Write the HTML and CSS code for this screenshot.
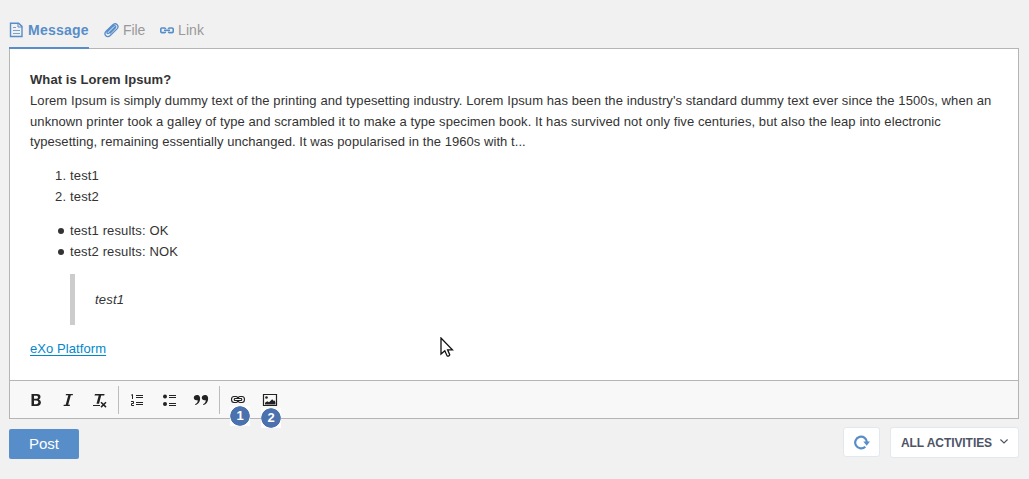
FILE: index.html
```html
<!DOCTYPE html>
<html lang="en">
<head>
<meta charset="utf-8">
<title>Activity composer</title>
<link rel="stylesheet" href="styles.css">
</head>
<body>
<main class="composer">
  <nav class="tabs">
    <a class="tab active"><svg class="i-doc" width="14" height="16" viewBox="0 0 14 16" fill="none" stroke="currentColor"><path stroke-width="1.4" d="M1.5 1.2H9.6L13 4.4V14.5H1.5Z"/><path d="M9 1V5H13" /><path stroke-width=".8" d="M4 5.5H7M4 8.5H11M4 11.5H11"/></svg><span class="t-message">Message</span></a>
    <a class="tab"><svg class="i-clip" width="15" height="15" viewBox="0 0 15 15" fill="none" stroke="currentColor" stroke-width="1.3" stroke-linecap="round"><path d="M8.6 2 2.1 8.3C-.9 11.3 3 15.6 6 12.7L12.8 6.1C16 2.8 11.8-.8 9.1 1.7M10.5 4.4 5 10C3.4 11.4 2.3 9.9 3.6 8.6L8.9 3.4C11 1.5 12.8 3.5 11 5.3L6.3 10"/></svg><span class="t-file">File</span></a>
    <a class="tab"><svg class="i-chain" width="14" height="7" viewBox="0 0 14 7" fill="none" stroke="currentColor" stroke-width="1.6"><path d="M5.5 2V1.8Q5.5 1 4.5 1H2Q.8 1 .8 2.1V4.5Q.8 5.6 2 5.6H4.5Q5.5 5.6 5.5 4.7V4.5M8.5 2V1.8Q8.5 1 9.5 1H12Q13.2 1 13.2 2.1V4.5Q13.2 5.6 12 5.6H9.5Q8.5 5.6 8.5 4.7V4.5M4 3.3H10"/></svg><span class="t-link">Link</span></a>
  </nav>
  <section class="editor">
    <div class="content">
      <p><strong>What is Lorem Ipsum?</strong><br><span class="l1">Lorem Ipsum is simply dummy text of the printing and typesetting industry. Lorem Ipsum has been the industry's standard dummy text ever since the 1500s, when an</span><br><span class="l2">unknown printer took a galley of type and scrambled it to make a type specimen book. It has survived not only five centuries, but also the leap into electronic</span><br><span class="l3">typesetting, remaining essentially unchanged. It was popularised in the 1960s with t...</span></p>
      <ol><li>test1</li><li>test2</li></ol>
      <ul><li>test1 results: OK</li><li>test2 results: NOK</li></ul>
      <blockquote>test1</blockquote>
      <p><a class="link">eXo Platform</a></p>
    </div>
    <div class="toolbar">
      <div class="group">
        <button class="tool" aria-label="Bold"><svg width="16" height="16" viewBox="0 0 16 16"><path fill="currentColor" fill-rule="evenodd" d="M3.5 2H9Q12.6 2.2 12.5 5.1 12.4 6.9 10.9 7.5 13 8.3 12.9 10.5 12.7 13.8 8.9 14H3.5ZM6 3.8V6.8H8.2Q10 6.7 10 5.2 10 3.8 8.2 3.8ZM6 8.6V12.2H8.4Q10.4 12 10.4 10.3 10.4 8.7 8.4 8.6Z"/></svg></button>
        <button class="tool" aria-label="Italic"><svg width="16" height="16" viewBox="0 0 16 16"><path fill="currentColor" d="M6 2H13L12.7 3.2H10.8L8.2 12.8H10L9.7 14H3.5L3.8 12.8H5.7L8.3 3.2H5.7Z"/></svg></button>
        <button class="tool" aria-label="Remove format"><svg width="16" height="16" viewBox="0 0 16 16"><path fill="currentColor" d="M3 2H12.6L12.2 3.6H9.2L7 11.8H4.5L6.7 3.6H2.5ZM1 13H8V14H1Z"/><path fill="none" stroke="currentColor" stroke-width="1.5" d="m9 10.3 5 4.8m0-4.8-5 4.8"/></svg></button>
      </div>
      <div class="group">
        <button class="tool" aria-label="Numbered list"><svg width="16" height="16" viewBox="0 0 16 16" fill="none" stroke="currentColor"><path stroke-width="1.1" d="M7 3.5H14M7 5.5H14M7 10.5H14M7 12.5H14"/><path d="M2.2 3.2 3.5 2.5V7M2 9.5H4.5V11.5H2.5V13.5H5"/></svg></button>
        <button class="tool" aria-label="Bulleted list"><svg width="16" height="16" viewBox="0 0 16 16"><circle cx="4" cy="4.6" r="2" fill="currentColor"/><circle cx="4" cy="12" r="2" fill="currentColor"/><path fill="none" stroke="currentColor" stroke-width="1.1" d="M8 3.5H15M8 5.5H15M8 11.5H15M8 13.5H15"/></svg></button>
        <button class="tool" aria-label="Quote"><svg width="16" height="16" viewBox="0 0 16 16" fill="currentColor"><path id="q" d="M4 3C8.4 2.6 8.4 11.2 2.7 13 2 13.1 2 12.4 2.5 12 4.2 11 4.8 9.9 4.7 8.2 2 8.7.7 7.4.8 5.6.9 4 2.2 3 4 3Z"/><use href="#q" x="8"/></svg></button>
      </div>
      <div class="group">
        <button class="tool" aria-label="Link"><svg width="16" height="16" viewBox="0 0 16 16" fill="none" stroke="currentColor" stroke-width="1.1"><path d="M7.5 6V5.5Q7.2 4.5 6 4.5H4Q1.5 4.5 1.5 7.5T4 10.5H6Q7.2 10.5 7.5 9.5V9M8.5 6V5.5Q8.8 4.5 10 4.5H12Q14.5 4.5 14.5 7.5T12 10.5H10Q8.8 10.5 8.5 9.5V9M4.7 6.5H11.3Q12.3 7.5 11.3 8.5H4.7Q3.7 7.5 4.7 6.5Z"/></svg><span class="badge one">1</span></button>
        <button class="tool" aria-label="Image"><svg width="16" height="16" viewBox="0 0 16 16"><path fill="none" stroke="currentColor" stroke-width="1.2" d="M1.5 2.5H14.5V13.5H1.5Z"/><circle cx="4.5" cy="5.5" r="1.3" fill="currentColor"/><path fill="currentColor" d="M3 12.5V10.8L5.3 9.3 7 10.3 10.2 7.3 11.5 8.8 12.5 8.5 13.4 10V12.5Z"/></svg><span class="badge two">2</span></button>
      </div>
    </div>
  </section>
  <footer class="actions">
    <button class="post">Post</button>
    <div class="filters">
      <button class="refresh" aria-label="Refresh"><svg width="16" height="15" viewBox="0 0 16 15"><path fill="none" stroke="currentColor" stroke-width="2.2" d="M11.3 11.7A5.9 5.9 0 1 1 13 7.5"/><path fill="currentColor" d="M9.3 6.5H16L12.7 10.7Z"/></svg></button>
      <button class="select"><span class="t-all">ALL ACTIVITIES</span><svg width="8" height="5" viewBox="0 0 8 5" fill="none" stroke="currentColor" stroke-width="1.2"><path d="m.4.5 3.6 3.4L7.6.5"/></svg></button>
    </div>
  </footer>
</main>
<svg class="pointer" width="14" height="21" viewBox="0 0 14 21"><path fill="#fff" stroke="#111" stroke-width="1.3" d="M1 1V17L4.8 13.7 7 18.7Q8.5 19.8 9.7 17.8L7.6 12.8H12.4Z"/></svg>
</body>
</html>
```
FILE: styles.css
```css
* { box-sizing: border-box; }
body { margin: 0; background: #f1f1f1; color: #333; font: 13px/20.8px "Liberation Sans", Arial, sans-serif; }
.composer { padding: 12px 10px 0 9px; }
button { border: 0; margin: 0; padding: 0; background: none; font-family: inherit; color: inherit; }
svg { display: block; flex: none; }

.tabs { display: flex; height: 36px; gap: 15px; }
.tab { display: flex; align-items: center; gap: 4px; height: 37px; color: #999; font-size: 14px; }
.tab svg { color: #578dc9; }
.active { width: 80px; gap: 5px; padding-top: 1px; color: #578dc9; font-weight: bold; border-bottom: 2px solid #578dc9; z-index: 1; }
.t-message { letter-spacing: .24px; }
.t-file { width: 22px; letter-spacing: -.1px; }
.t-link { letter-spacing: .1px; }

.editor { border: 1px solid #b5b5b5; background: #fff; height: 371px; display: flex; flex-direction: column; }
.content { flex: 1; padding: 21px 20px 0; white-space: nowrap; }
.content p { margin: 0; }
.content ol, .content ul { margin: 13px 0; padding-left: 40px; }
.content ol { letter-spacing: .15px; }
.content ul { margin-bottom: 12px; padding-left: 0; list-style: none; letter-spacing: .14px; }
.content ul li { display: flex; align-items: center; padding-left: 28px; gap: 6px; }
.content ul li::before { content: ""; width: 6px; height: 6px; border-radius: 50%; background: #333; }
.content blockquote { margin: 12px 40px 14px; padding: 16px 20px 14px; border-left: 5px solid #ccc; font-style: italic; letter-spacing: .2px; }
.content strong { letter-spacing: .09px; }
.l1 { letter-spacing: .0875px; }
.l2 { letter-spacing: .084px; }
.l3 { letter-spacing: .058px; }
.link { color: #0088cc; text-decoration: underline; text-underline-offset: 2px; letter-spacing: .08px; }

.toolbar { display: flex; align-items: center; height: 39px; flex: none; margin-top: -1px; padding-left: 10px; background: #f8f8f8; border-top: 1px solid #b5b5b5; }
.content + .toolbar { height: 38px; margin-top: 0; padding-top: 1px; }
.group { display: flex; height: 28px; align-items: center; }
.group + .group { border-left: 1px solid #bcbcbc; margin-left: 2px; padding-left: 2px; }
.tool { position: relative; width: 32px; height: 28px; display: flex; align-items: center; justify-content: center; color: #222; }
.group:first-child { width: 96px; }
.badge { position: absolute; width: 20px; height: 20px; background: radial-gradient(circle, #4c72ae 0 9.4px, #fff 10px); color: #fff; font: bold 13px/20px "Liberation Sans", sans-serif; text-align: center; z-index: 1; }
.one { left: 8px; top: 20px; }
.two { left: 7px; top: 22px; }

.actions { display: flex; justify-content: space-between; padding-top: 8px; }
.post { width: 70px; height: 30px; margin-top: 2px; padding-bottom: 2px; border-radius: 2px; background: #578dc9; color: #fff; font-size: 15px; }
.filters { display: flex; gap: 10px; }
.refresh, .select { display: flex; align-items: center; justify-content: center; background: #fff; border: 1px solid #e1e8ee; border-radius: 3px; }
.refresh { width: 37px; height: 30px; padding-left: 1px; color: #578dc9; }
.select { width: 129px; height: 31px; gap: 8px; color: #4d5466; font-size: 12px; font-weight: bold; }
.t-all { letter-spacing: -.07px; }
.select svg { margin-bottom: 2px; }
.pointer { position: absolute; left: 440px; top: 337px; }
```
